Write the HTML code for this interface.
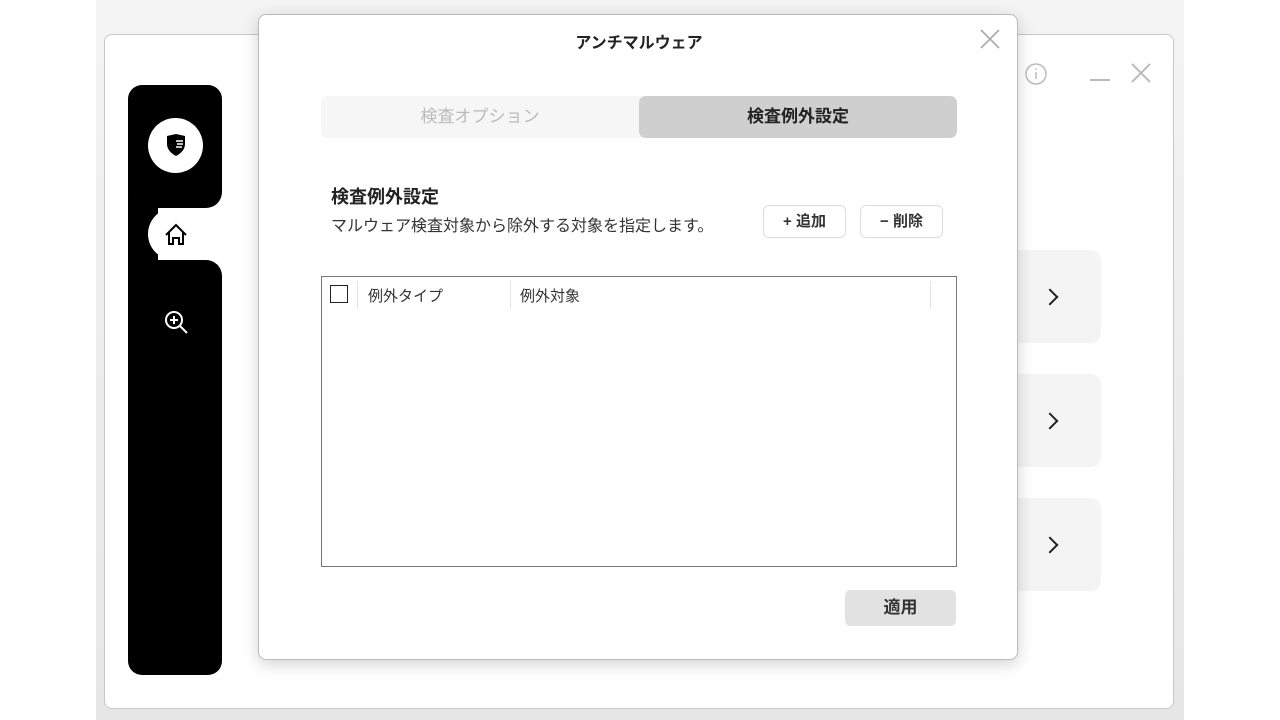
<!DOCTYPE html>
<html><head><meta charset="utf-8"><style>
*{margin:0;padding:0;box-sizing:border-box}
body{width:1280px;height:720px;position:relative;overflow:hidden;background:#fff;font-family:"Liberation Sans","Noto Sans CJK JP",sans-serif;color:#222}
.bg{position:absolute;left:96px;top:0;width:1088px;height:720px;background:linear-gradient(#f4f4f4,#e6e6e6)}
.win{position:absolute;left:104px;top:34px;width:1070px;height:675px;background:#fff;border:1px solid #c8c8c8;border-radius:8px}
.blk{position:absolute;background:#000}
.card{position:absolute;left:1010px;width:91px;height:93px;background:#f4f4f4;border-radius:10px}
.chev{position:absolute;left:1044px;width:12px;height:12px;border-right:2.5px solid #222;border-top:2.5px solid #222;transform:rotate(45deg)}
.dlg{position:absolute;left:258px;top:14px;width:760px;height:646px;background:#fff;border:1px solid #bbb;border-radius:8px;box-shadow:0 4px 16px rgba(0,0,0,.18)}
.abs{position:absolute}
.btn{position:absolute;top:190px;height:33px;border:1px solid #ddd;border-radius:6px;background:#fff;font-size:15px;font-weight:bold;text-align:center;line-height:31px;color:#333}
</style></head><body>
<div class="bg"></div>
<div class="win"></div>
<!-- sidebar -->
<div class="blk" style="left:128px;top:85px;width:94px;height:123px;border-radius:14px 14px 16px 14px"></div>
<div class="blk" style="left:128px;top:195px;width:30px;height:80px"></div>
<div class="blk" style="left:128px;top:260px;width:94px;height:415px;border-radius:16px 16px 14px 14px"></div>
<div class="abs" style="left:148px;top:208px;width:80px;height:52px;background:#fff;border-radius:26px 0 0 26px"></div>
<div class="abs" style="left:148px;top:118px;width:55px;height:55px;border-radius:50%;background:#fff"></div>
<svg class="abs" style="left:165px;top:133px" width="22" height="24" viewBox="0 0 22 24"><path d="M2 3 L11 1 L20 3 L20 11 C20 17 15 21 11 23 C7 21 2 17 2 11Z" fill="#000"/><path d="M11 8h7M12 11h6M11 14h6" stroke="#fff" stroke-width="1.6"/></svg>
<svg class="abs" style="left:163px;top:222px" width="26" height="26" viewBox="0 0 26 26" fill="none" stroke="#000" stroke-width="2"><path d="M3 13 L13 3 L23 13 M6 10 V22 H10 V16 H16 V22 H20 V10"/></svg>
<svg class="abs" style="left:162px;top:308px" width="28" height="28" viewBox="0 0 28 28" fill="none" stroke="#fff" stroke-width="2"><circle cx="12" cy="12" r="8"/><path d="M18 18 L25 25 M12 8 V16 M8 12 H16"/></svg>
<!-- right bg items -->
<svg class="abs" style="left:1024px;top:62px" width="24" height="24" viewBox="0 0 24 24" fill="none" stroke="#bbb" stroke-width="1.5"><circle cx="12" cy="12" r="10"/><path d="M12 10v7M12 6.5v1.5"/></svg>
<div class="abs" style="left:1090px;top:79px;width:20px;height:2px;background:#bbb"></div>
<svg class="abs" style="left:1130px;top:62px" width="22" height="22" viewBox="0 0 22 22" stroke="#bbb" stroke-width="2"><path d="M2 2L20 20M20 2L2 20"/></svg>
<div class="card" style="top:250px"></div><div class="chev" style="top:291px"></div>
<div class="card" style="top:374px"></div><div class="chev" style="top:415px"></div>
<div class="card" style="top:498px"></div><div class="chev" style="top:539px"></div>
<!-- dialog -->
<div class="dlg">
<div class="abs" style="left:0;width:760px;top:14px;text-align:center;font-size:16px;font-weight:bold">アンチマルウェア</div>
<svg class="abs" style="left:721px;top:14px" width="20" height="20" viewBox="0 0 20 20" stroke="#aaa" stroke-width="1.6"><path d="M1 1L19 19M19 1L1 19"/></svg>
<div class="abs" style="left:62px;top:81px;width:636px;height:42px;background:#f6f6f6;border-radius:7px"></div>
<div class="abs" style="left:62px;top:81px;width:318px;height:42px;line-height:42px;text-align:center;font-size:17px;color:#bbb">検査オプション</div>
<div class="abs" style="left:380px;top:81px;width:318px;height:42px;line-height:42px;text-align:center;font-size:17px;font-weight:bold;background:#cfcfcf;border-radius:7px;color:#222">検査例外設定</div>
<div class="abs" style="left:72px;top:168px;font-size:18px;font-weight:bold">検査例外設定</div>
<div class="abs" style="left:72px;top:197px;font-size:16px;color:#333">マルウェア検査対象から除外する対象を指定します。</div>
<div class="btn" style="left:504px;width:83px">+ 追加</div>
<div class="btn" style="left:601px;width:83px">− 削除</div>
<div class="abs" style="left:62px;top:261px;width:636px;height:291px;border:1.5px solid #777">
<div class="abs" style="left:8px;top:8px;width:18px;height:18px;border:1.5px solid #222"></div>
<div class="abs" style="left:35px;top:4px;width:1px;height:28px;background:#e4e4e4"></div>
<div class="abs" style="left:46px;top:8px;font-size:15px;color:#333">例外タイプ</div>
<div class="abs" style="left:188px;top:4px;width:1px;height:28px;background:#e4e4e4"></div>
<div class="abs" style="left:198px;top:8px;font-size:15px;color:#333">例外対象</div>
<div class="abs" style="left:608px;top:4px;width:1px;height:28px;background:#e4e4e4"></div>
</div>
<div class="abs" style="left:586px;top:575px;width:111px;height:36px;background:#e2e2e2;border-radius:6px;text-align:center;line-height:36px;font-size:17px;font-weight:bold;color:#333">適用</div>
</div>
</body></html>
